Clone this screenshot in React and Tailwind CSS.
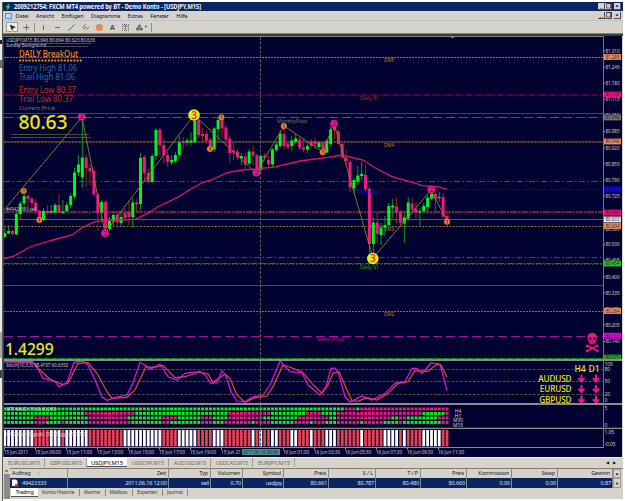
import { clsx } from "clsx";
import {
  MousePointer2, Plus, Minus, Slash, ChartNoAxesGantt, Grid3x3, Type, Shapes,
} from "lucide-react";

const LIME = "#00f818";
const PINK = "#f0187c";
const STEP = 3.88;
const barX = i => 4.7 + i * STEP;

// direction, wick top, body top, body bottom, wick bottom
const CANDLES = [
  ["u", 228, 233, 237, 238], ["u", 225, 231, 233.5, 234], ["d", 230, 231, 234, 235], ["u", 212, 214, 234.5, 235],
  ["u", 201, 203.5, 214, 220], ["u", 193, 196, 203.5, 211], ["d", 194, 196, 199, 207], ["d", 197, 198.5, 203, 208],
  ["d", 199, 202.5, 211, 214], ["d", 210, 210.5, 220, 221], ["u", 208, 211, 220, 221], ["d", 205, 211, 213, 215],
  ["u", 205, 211, 212.5, 214], ["u", 203, 205, 212.5, 213.5], ["d", 194, 205, 212.5, 213], ["u", 200, 211.5, 213, 214],
  ["u", 202, 205, 211, 212.5], ["u", 193, 196, 205, 208], ["u", 168, 172.5, 196.5, 199], ["u", 155, 164.5, 172.5, 176],
  ["u", 117, 157.5, 177.5, 188], ["d", 155, 157.5, 168, 187], ["d", 164, 168, 171.5, 185], ["d", 167, 171, 194.5, 196],
  ["d", 192, 194.5, 213, 231], ["u", 200, 202, 212.5, 221], ["d", 200, 202, 228.5, 233], ["u", 217, 221, 229, 231],
  ["u", 211, 215, 221.5, 227], ["d", 212, 214.5, 222.5, 228], ["u", 211, 217, 223, 227], ["d", 208, 213, 218, 222],
  ["d", 201, 212.5, 217, 225], ["u", 198, 202.5, 217, 227], ["d", 199, 202.5, 204.5, 212], ["u", 153, 158, 204, 210],
  ["d", 155, 157, 173, 180], ["d", 168, 173, 182, 183], ["u", 154, 156, 182, 183], ["u", 128, 130, 156, 160],
  ["d", 128, 129.5, 145, 157], ["d", 138, 145, 155, 164], ["d", 152, 155, 162, 167], ["u", 155, 160, 162.5, 165],
  ["u", 152, 155, 161, 163], ["u", 136, 142.5, 155, 158], ["d", 137, 141, 143, 150], ["u", 138, 140.5, 142.5, 146],
  ["u", 132, 140.5, 142.5, 145], ["u", 117, 121, 142, 143], ["d", 118, 120, 135, 138], ["d", 128, 134, 136, 142],
  ["d", 131, 134, 140.5, 144], ["d", 138, 139.5, 149.5, 151], ["u", 127, 128.5, 149.5, 152], ["u", 117, 120, 129, 142],
  ["d", 117, 119.5, 128.5, 138], ["d", 125, 127.5, 139.5, 145], ["d", 136, 138.5, 153, 163], ["d", 142, 150.5, 152.5, 160],
  ["d", 149, 151.5, 157.5, 160], ["u", 153, 156, 158.5, 165], ["d", 153, 156.5, 164.5, 169], ["u", 149, 151.5, 163.5, 165],
  ["d", 145, 151.5, 155.5, 165], ["d", 154, 155, 171, 172], ["u", 155, 156, 170, 172], ["d", 153, 155.5, 157.5, 161],
  ["d", 156, 160, 164.5, 167], ["u", 148, 149.5, 164.5, 168], ["u", 142, 144.5, 150, 152], ["u", 131, 133.5, 146, 148],
  ["d", 127, 134, 146, 150], ["d", 142, 143.5, 147.5, 149], ["u", 136, 140.5, 146, 151], ["u", 133, 138.5, 142, 144],
  ["d", 137, 139.5, 147.5, 150], ["d", 138, 147.5, 149.5, 152], ["u", 142, 146, 149.5, 153], ["d", 139, 141, 146, 148],
  ["d", 138, 141, 144.5, 149], ["u", 141, 142.5, 147, 148], ["d", 141, 142.5, 151.5, 153], ["u", 139, 141, 152.5, 153],
  ["u", 127, 129.5, 144, 146], ["d", 123, 125, 130.5, 139], ["d", 129, 131.5, 144, 145], ["d", 141, 144, 157.5, 159],
  ["d", 150, 157.5, 161, 165], ["d", 160, 162, 187.5, 192], ["u", 178, 180, 188.5, 193], ["u", 166, 175.5, 181.5, 185],
  ["u", 162, 174, 176, 180], ["d", 165, 175, 189.5, 192], ["d", 187, 189, 244, 257], ["u", 217, 222.5, 244, 259],
  ["d", 213, 222.5, 234, 243], ["u", 223, 227.5, 235, 245], ["u", 216, 225, 227.5, 236], ["u", 203, 206, 225, 227],
  ["u", 199, 205.5, 207.5, 218], ["d", 198, 206.5, 212.5, 223], ["d", 210, 211.5, 222.5, 227], ["u", 213, 217.5, 223.5, 243],
  ["u", 197, 202.5, 218.5, 221], ["d", 198, 203.5, 209.5, 212], ["d", 202, 208.5, 212.5, 218], ["u", 208, 211, 212.5, 227],
  ["u", 203, 206, 211, 213], ["u", 195, 197.5, 207, 213], ["u", 190, 194, 198.5, 200], ["d", 193, 194, 199, 211],
  ["u", 192, 197, 198, 202], ["d", 193, 197, 216.5, 218], ["d", 213, 216, 221, 223],
];

const LEVELS = [
  { y: 57.5, c: "#9a7428", dash: "2 1" },
  { y: 95, c: "#780040", dash: "6 1.5 1.5 1.5", w: 1.3 },
  { y: 113.5, c: "#0c5488" },
  { y: 117.5, c: "#56564c", dash: "9 4" },
  { y: 141.7, c: "#4e4a40" },
  { y: 142.6, c: "#7a4a20", dash: "2 1.4" },
  { y: 181.5, c: "#8a3414", dash: "6 2.5 1.5 2.5" },
  { y: 189.5, c: "#0808a0", dash: "9 4" },
  { y: 212, c: "#9a7a24", dash: "7 1 2 1" },
  { y: 213, c: "#6c0834", dash: "3 1" },
  { y: 219.5, c: "#5c5c38" },
  { y: 226.5, c: "#8c7430", dash: "2 1.4" },
  { y: 257.5, c: "#8a3414", dash: "6 2.5 1.5 2.5" },
  { y: 263.5, c: "#2c6460", dash: "6 1 1.5 1" },
  { y: 264.5, c: "#1c4a14", dash: "2 2" },
  { y: 285.5, c: "#803a14" },
  { y: 311.5, c: "#8c6c28", dash: "2 1" },
  { y: 336.5, c: "#a8109c", dash: "9 4" },
  { y: 358.5, c: "#148c2c", dash: "5 1 1 1" },
];

const PRICES = [
  [51, "81.310"], [67, "81.245"], [83, "81.180"], [99.5, "81.115"], [115, "81.050"], [131.5, "80.985"],
  [148, "80.920"], [164, "80.855"], [180, "80.790"], [196, "80.725"], [229, "80.595"], [244.5, "80.530"],
  [260, "80.465"], [277, "80.400"], [293, "80.335"], [309, "80.270"], [325, "80.205"], [341.5, "80.140"],
];

const TAGS = [
  [57, "81.285", "#f09060"], [94.5, "81.135", "#f0107c"], [117.5, "81.046", "#707070"], [141.5, "80.946", "#f09060"],
  [189.5, "80.754", "#0000f0"], [212.5, "80.660", "#f0107c"], [219.5, "80.633", "#f0f0e8"], [226, "80.604", "#f09060"],
  [263.5, "80.454", "#20c820"], [311, "80.264", "#f09060"], [335.7, "80.163", "#e800e8"], [357.5, "80.075", "#20a820"],
];

// x, y, radius, kind
const MARKS = [
  [23.7, 191, 3, "o"], [39.3, 220, 3, "o"], [81.7, 116.8, 3.8, "p"], [105, 233.3, 3.8, "p"], [194, 115, 5.8, "y"],
  [210, 149, 3, "o"], [221.5, 117.3, 3, "o"], [256.3, 172.8, 3.8, "p"], [283.8, 126, 3, "o"], [322.6, 152.3, 3, "o"],
  [334, 123.5, 3.8, "p"], [372.8, 258.5, 5.8, "y"], [431.3, 189.5, 3.8, "p"], [447, 221.8, 3, "o"],
];

const MARK_STYLE = {
  o: { fill: "#f07838", text: "#701c10", label: "1" },
  p: { fill: "#e8188c", text: "#78186c", label: "2" },
  y: { fill: "#e4f010", text: "#e02850", label: "3" },
};

const MTF_GREEN = [
  [[0, 87], [91, 91]],
  [[0, 20], [34, 57], [69, 77], [82, 85], [108, 113]],
  [[0, 7], [12, 21], [32, 40], [45, 50], [54, 57], [67, 75], [84, 85], [100, 101], [104, 111]],
  [[0, 7], [11, 14], [16, 21], [33, 40], [43, 50], [54, 56], [64, 64], [69, 74], [79, 79], [83, 85], [92, 92], [98, 101], [103, 112]],
];
const WHITE_BARS = [
  [0, 7], [12, 14], [16, 21], [31, 40], [45, 49], [54, 56], [64, 64], [66, 66], [69, 70], [74, 75], [79, 79],
  [83, 85], [92, 92], [98, 101], [103, 103], [108, 112],
];
const inRuns = (runs, i) => runs.some(([a, b]) => i >= a && i <= b);

const MA = "4,258.5 13,256.5 31,246.5 53,240 72,235 82,227.7 95,221.7 110,220.3 135,219.3 148,213.3 158,206.7 177,197.7 192,188.3 203,182.3 210,180.5 228,172.3 242,170 273,167.3 300,161 328,157.3 342,155 363,160 377,169 392,176.7 415,183 422,185.7 438,186.7 447,189.3";
const ZIGZAG = "4,210 82,117 105,233 194,115 256,173 284,126 323,152 334,123 373,258 431,190 447,221";
const STOCH_MAIN = "4,362 33,362.3 38,369 43,378.3 50,380 55,381.7 59,386.7 67,382.7 74,362.3 83,360.8 88,365 95,380 102,397 107,400.3 115,397.7 127,395 133,383 140,362.3 145,365 150,369.3 155,367 160,364 168,376.7 177,380 185,373.3 200,371.3 205,375 211,383.3 217,382.7 222,370.7 226,376 231,391.7 237,401 245,401.7 252,397.3 263,395 270,385 280,361 290,371.7 302,372.7 308,385 320,395 326,386.7 331,368.3 335,368 338,371.7 345,396.7 350,402 362,396 372,400 385,393.3 395,383.3 405,381.7 412,368.3 417,368.3 422,373.3 426,369 431,363 440,364 447,390.7";
const STOCH_SIGNAL = "4,361.5 32,361.7 38,368.3 50,379.3 62,384.3 68,383.3 78,363.3 88,362.7 97,373.3 107,391.7 112,398.3 127,397.3 135,390 146,366.7 152,367.3 163,365.3 175,377.7 185,376.7 200,372 208,374 213,382.3 219,378 225,374.3 230,378.3 237,395 245,402.3 255,397.7 267,396 273,386.7 283,365 290,367.3 302,371.7 312,383.3 322,393.3 328,385 333,373.3 339,371.7 347,390 352,400.7 358,401.3 367,397.7 377,400 388,393.3 398,383.3 408,381.7 415,370.7 428,371.3 437,364.3 441,365 447,377.3";

const TIMES = [
  [4, "15 Jun 2011"], [35, "15 Jun 09:00"], [66, "15 Jun 11:00"], [97, "15 Jun 13:00"], [128, "15 Jun 15:00"],
  [159, "15 Jun 17:00"], [190, "15 Jun 19:00"], [221, "15 Jun 21"], [283, "16 Jun 01:30"], [314, "16 Jun 03:30"],
  [345, "16 Jun 05:30"], [376, "16 Jun 07:30"], [407, "16 Jun 09:30"], [438, "16 Jun 11:30"],
];

const MENU = ["Datei", "Ansicht", "Einfügen", "Diagramme", "Extras", "Fenster", "Hilfe"];
const CHART_TABS = ["EURUSD,M15", "GBPUSD,M15", "USDJPY,M15", "USDCHF,M15", "AUDUSD,M15", "USDCAD,M15", "EURJPY,M15"];
const TERMINAL_TABS = ["Trading", "Konto Historie", "Alarme", "Mailbox", "Experten", "Journal"];
const COLUMNS = [
  { w: "w-[58px]", head: "Auftrag", value: "49423333", left: true },
  { w: "w-[101px]", head: "Zeit", value: "2011.06.16 12:00" },
  { w: "w-[42px]", head: "Typ", value: "sell" },
  { w: "w-[32px]", head: "Volumen", value: "0.70" },
  { w: "w-[41px]", head: "Symbol", value: "usdjpy" },
  { w: "w-[45px]", head: "Preis", value: "80.661" },
  { w: "w-[47px]", head: "S / L", value: "80.787" },
  { w: "w-[45px]", head: "T / P", value: "80.480" },
  { w: "w-[46px]", head: "Preis", value: "80.660" },
  { w: "w-[45px]", head: "Kommission", value: "0.00" },
  { w: "w-[46px]", head: "Swap", value: "0.00" },
  { w: "w-[55px]", head: "Gewinn", value: "0.87" },
];

function Label({ x, y, size, fill, width, anchor, children, weight }) {
  return (
    <text x={x} y={y} fontSize={size} fill={fill} textAnchor={anchor} fontWeight={weight}
      textLength={width} lengthAdjust="spacingAndGlyphs">
      {children}
    </text>
  );
}

// All panels share one coordinate system, each shows its own slice of it
function Panel({ top, height, children }) {
  return (
    <svg className="block bg-[#020230]" width={618} height={height} viewBox={`4 ${top} 618 ${height}`}>
      {children}
      <path d={`M603.5 ${top}V${top + height}`} stroke="#74746c" />
    </svg>
  );
}

function Crosshair({ from, to }) {
  return <path d={`M260.5 ${from}V${to}`} stroke="#5c5c54" strokeDasharray="3 1.5" />;
}

function Candles() {
  return CANDLES.map(([dir, hi, top, bottom, lo], i) => {
    const up = dir === "u";
    return (
      <g key={i}>
        <rect x={barX(i) - 0.5} y={hi} width={1} height={lo - hi} fill={up ? "#0c9820" : "#982818"} />
        <rect x={barX(i) - 1.5} y={top} width={3} height={bottom - top} fill={up ? LIME : PINK} />
      </g>
    );
  });
}

function Skull() {
  return (
    <g fill="#f0187c">
      <path d="M587.5 338q0-5 4.7-5t4.7 5q0 3-2 4v2.500h-5.400V342q-2-1-2-4z" />
      <path d="m587 345.500 10.500 5.500m0-5.500-10.500 5.500" stroke="#f0187c" strokeWidth="1.800" />
      <circle cx="587" cy="345.800" r="1.200" /><circle cx="597.500" cy="345.800" r="1.200" />
      <circle cx="587" cy="351" r="1.200" /><circle cx="597.500" cy="351" r="1.200" />
      <path d="M589 337.500h2.300v2.200H589zM593.200 337.500h2.300v2.200h-2.300zM591.700 340.800h1v1.200h-1z" fill="#020230" />
      <path d="M590.700 343v2M592.300 343v2M593.900 343v2" stroke="#020230" strokeWidth=".4" />
    </g>
  );
}

function MainPanel() {
  return (
    <Panel top={36} height={325}>
      {LEVELS.map(l => (
        <path key={l.y} d={`M4 ${l.y}H603`} stroke={l.c} strokeWidth={l.w || 1} strokeDasharray={l.dash} />
      ))}
      <Crosshair from={37} to={360} />
      <path d="M15 43.500H91M46 46.500H88M12 134.500H89M11 137.500H91" stroke="#4c4c38" />
      <Candles />
      <polyline points={MA} fill="none" stroke="#e01464" strokeWidth="1.300" />
      <polyline points={ZIGZAG} fill="none" stroke="#8c8028" strokeWidth=".9" />
      {MARKS.map(([x, y, r, kind]) => {
        const m = MARK_STYLE[kind];
        return (
          <g key={x}>
            <circle cx={x} cy={y} r={r} fill={m.fill} />
            <Label x={x} y={y + r * 0.63} size={r * 1.75} fill={m.text} anchor="middle" weight="600">{m.label}</Label>
          </g>
        );
      })}

      <Label x={6} y={41.5} size={5} fill="#c8c8bc" width={89}>USDJPY,M15  80.646 80.664 80.623 80.633</Label>
      <Label x={6} y={46.5} size={5} fill="#c8c8bc" width={40}>Sunday Background</Label>
      <Label x={19} y={57.3} size={9} fill="#f88820" width={59} weight="500">DAILY BreakOut</Label>
      <path d="M19 60.500H83" stroke="#f08420" strokeWidth="2" strokeDasharray="2 1.200" />
      <Label x={19} y={71.2} size={8.5} fill="#1c6cac" width={58}>Entry High 81.06</Label>
      <Label x={19} y={80.3} size={8.5} fill="#1c6cac" width={56}>Trail High 81.06</Label>
      <Label x={19} y={92.5} size={8.5} fill="#c43014" width={57}>Entry Low 80.37</Label>
      <Label x={19} y={101.8} size={8.5} fill="#c43014" width={54}>Trail Low 80.37</Label>
      <Label x={19} y={110} size={5.5} fill="#7c7450" width={36}>Current Price</Label>
      <Label x={18.5} y={129} size={19.5} fill="#f0e418" width={49} weight="500">80.63</Label>
      <Label x={6} y={211.3} size={4.5} fill="#c0c0b4" width={30}>#49423333 sell</Label>
      <Label x={5} y={354.5} size={15.5} fill="#e4f010" width={48.5} weight="500">1.4299</Label>

      <Label x={384} y={62.3} size={5} fill="#d07c28" width={10}>DM5</Label>
      <Label x={360} y={99.500} size={5} fill="#c01c18" width={19}>Daily R1</Label>
      <Label x={277} y={122.500} size={5} fill="#74745c" width={30}>MonthlyPivot</Label>
      <Label x={384} y={146.500} size={5} fill="#d07c28" width={10}>DM4</Label>
      <Label x={357} y={194.300} size={5} fill="#1414c0" width={24}>Daily Pivot</Label>
      <Label x={384} y={230.800} size={5} fill="#d07c28" width={10}>DM3</Label>
      <Label x={360} y={268.800} size={5} fill="#20a020" width={19}>Daily S1</Label>
      <Label x={384} y={315.800} size={5} fill="#d07c28" width={10}>DM2</Label>
      <Label x={317} y={341} size={5} fill="#c0109c" width={27}>WeeklyPivot</Label>
      <Skull />

      <rect x={604} y={36} width={18} height={325} fill="#020230" />
      {PRICES.map(([y, p]) => (
        <g key={p}>
          <path d={`M603 ${y}h2`} stroke="#a0a098" />
          <Label x={605.5} y={y + 1.8} size={5} fill="#ccccc0" width={14}>{p}</Label>
        </g>
      ))}
      {TAGS.map(([y, p, fill]) => (
        <g key={p}>
          <rect x={604} y={y - 2.9} width={17} height={5.800} fill={fill} />
          <Label x={605.5} y={y + 1.8} size={5} fill="#3c1c28" width={14}>{p}</Label>
        </g>
      ))}
      <path d="M4 36.500H603" stroke="#808080" />
      <path d="M450.500 36.500h4l-2 2z" fill="#98a898" />
      <path d="M4 360H622" stroke="#8c8c88" strokeWidth="2" />
    </Panel>
  );
}

function StochPanel() {
  return (
    <Panel top={361} height={44}>
      <path d="M4 369.500H603M4 381.500H603M4 394.500H603" stroke="#4c4c38" strokeDasharray="3 1.300" />
      <Crosshair from={361} to={403} />
      <polyline points={STOCH_SIGNAL} fill="none" stroke="#e84838" strokeWidth="1.200" />
      <polyline points={STOCH_MAIN} fill="none" stroke="#e814dc" strokeWidth="1.200" />
      <Label x={6} y={367} size={5} fill="#c8c8bc" width={62}>Stoch(10,3,3) 38.4737 60.6352</Label>
      <Label x={574.500} y={371.500} size={8.500} fill="#ece818" width={11} weight="500">H4</Label>
      <Label x={588.500} y={371.500} size={8.500} fill="#ece818" width={11} weight="500">D1</Label>
      {["AUDUSD", "EURUSD", "GBPUSD"].map((pair, i) => (
        <g key={pair}>
          <Label x={571.5} y={382 + i * 10.4} size={8.2} fill="#ece818" anchor="end" weight="500">{pair}</Label>
          {[581.500, 596].map(x => (
            <path key={x} d={`M${x} ${374.5 + i * 10.5}v7m-3-3.200 3 3.200 3-3.200`} fill="none" stroke="#f0187c" strokeWidth="2.100" />
          ))}
        </g>
      ))}
      {[[365.5, "100"], [371, "80"], [383.3, "50"], [396, "20"], [402, "0"]].map(([y, t]) => (
        <Label key={t} x={604.5} y={y} size={5} fill="#ccccc0">{t}</Label>
      ))}
      <path d="M4 404H622" stroke="#8c8c88" strokeWidth="2" />
    </Panel>
  );
}

function MtfPanel() {
  return (
    <Panel top={405} height={24}>
      {MTF_GREEN.map((runs, row) => CANDLES.map((_, i) => (
        <rect key={`${row}-${i}`} x={barX(i) - 1.4} y={407.5 + row * 4.5} width={2.9} height={2.9}
          fill={inRuns(runs, i) ? LIME : PINK} />
      )))}
      <Crosshair from={405} to={428} />
      <Label x={6} y={411} size={5} fill="#e0e0d4" width={50}>MTF MACD (15,30,60,240)</Label>
      {["H4", "H1", "M30", "M15"].map((t, i) => (
        <Label key={t} x={458} y={413.3 + i * 4.5} size={5} fill="#d0d0c4" anchor="middle">{t}</Label>
      ))}
      <Label x={604.5} y={409.5} size={5} fill="#ccccc0">5</Label>
      <Label x={604.5} y={426.5} size={5} fill="#ccccc0">0</Label>
      <path d="M4 428.500H622" stroke="#8c8c88" strokeWidth="1.300" />
    </Panel>
  );
}

function TrendPanel() {
  return (
    <Panel top={429} height={19}>
      {CANDLES.map((_, i) => {
        const white = inRuns(WHITE_BARS, i);
        return (
          <g key={i}>
            <rect x={barX(i) - 1.4} y={430} width={2.8} height={16.3} fill={white ? "#fbfbfb" : "#dc3c54"} />
            {!white && <path d={`M${barX(i)} 430V446`} stroke="#f08838" strokeWidth=".7" strokeDasharray="1 2" />}
          </g>
        );
      })}
      <Crosshair from={429} to={447} />
      <Label x={6} y={435.5} size={5} fill="#d8d8d0" width={80}>FX Sniper Ergodic CCI Trigger 0.0 1.0</Label>
      <Label x={604.5} y={434.3} size={5} fill="#ccccc0">1.05</Label>
      <Label x={604.5} y={446.3} size={5} fill="#ccccc0">-0.05</Label>
      <path d="M4 447.500H603" stroke="#8c8c88" />
    </Panel>
  );
}

function TimeAxis() {
  return (
    <svg className="block bg-[#020230]" width={618} height={9} viewBox="4 448 618 9">
      {TIMES.map(([x, t]) => (
        <g key={x}>
          <path d={`M${x + 0.5} 447v2.500`} stroke="#a0a098" />
          <Label x={x} y={453.6} size={5} fill="#ccccc0" width={x === 4 ? 24 : x === 221 ? 20 : 26}>{t}</Label>
        </g>
      ))}
      <rect x={242} y={449} width={38} height={6} fill="#4c908c" />
      <Label x={243} y={453.8} size={5} fill="#0c2c3c" width={35}>2011.06.16 00:00</Label>
    </svg>
  );
}

function WindowButtons() {
  return (
    <div className="flex h-[7px] text-[6px] leading-[6px] font-bold text-black">
      {["_", "❐", "×"].map(c => (
        <span key={c} className={clsx(
          "flex w-[7px] items-center justify-center border-r border-b border-[#505050] bg-[#d6d3cb]",
          c === "×" && "ml-[2px]"
        )}>{c}</span>
      ))}
    </div>
  );
}

function Header() {
  return (
    <header className="bg-[#d6d3cb]">
      <div className="flex h-[9px] items-center justify-between bg-[#0c2460] pr-[2px] pl-[2px]">
        <div className="flex items-center gap-[3px]">
          <svg width="6" height="8" viewBox="0 0 6 8"><path d="M4.500 0 .5 4.500h2L1.500 8 5.500 3h-2z" fill="#30d850" /></svg>
          <svg width="190" height="9" className="overflow-visible">
            <Label x={0} y={6.8} size={6.3} fill="#f0f4ff" weight="bold" width={187}>
              2009212754: FXCM MT4 powered by BT - Demo Konto - [USDJPY,M15]
            </Label>
          </svg>
        </div>
        <WindowButtons />
      </div>
      <div className="flex h-[10px] items-center justify-between border-b border-dotted border-[#a8b0c0] pr-[2px] pl-[2px]">
        <div className="flex items-center gap-[7.600px] text-[5.500px] leading-[8px] tracking-[-0.15px] text-[#101010]">
          <span className="-mr-[4px] h-[6px] w-[7px] border border-[#5890e0] bg-[#b8dcf8]" />
          {MENU.map(m => <span key={m}>{m}</span>)}
        </div>
        <WindowButtons />
      </div>
      <div className="flex h-[13px] items-center gap-[7px] border-b border-[#888478] pl-[3px] text-[#505050]">
        <span className="-mr-[3px] flex h-[10px] w-[12px] items-center justify-center border border-[#a09c90] bg-[#f0eee8]">
          <MousePointer2 size={7} fill="#202020" className="text-[#202020]" />
        </span>
        <Plus size={9} strokeWidth={2} className="-mr-px" />
        <span className="-mr-[2px] -ml-[3px] h-[9px] w-px bg-[#908c84]" />
        <Minus size={7} strokeWidth={3} className="rotate-90" />
        <Minus size={7} strokeWidth={3} />
        <Slash size={7} strokeWidth={3} />
        <ChartNoAxesGantt size={7} strokeWidth={3} className="-rotate-45 text-[#7a3c28]" />
        <Grid3x3 size={7} strokeWidth={3} className="text-[#d87840]" />
        <span className="text-[7px] leading-none font-bold">A</span>
        <span className="flex size-[7px] items-center justify-center border border-dotted border-[#606060]">
          <Type size={5} strokeWidth={3} />
        </span>
        <span className="flex items-center gap-px">
          <Shapes size={7} strokeWidth={3} className="text-[#3c3830]" /><span className="text-[4px]">▼</span>
        </span>
        <span className="-ml-[4px] h-[9px] w-px bg-[#908c84]" />
      </div>
    </header>
  );
}

function ChartTabs() {
  return (
    <nav className="flex h-[11px] items-start border-t border-[#f4f2ec] text-[#6c6860]">
      {CHART_TABS.map(t => {
        const active = t === "USDJPY,M15";
        return (
          <span key={t} className={clsx(
            "flex h-[9px] items-center justify-center",
            active ? "w-[40px] border-b border-[#505050] bg-white text-black" : "w-[42px] border-r border-[#a09c94]"
          )}>
            <svg width="34" height="9" className="overflow-visible">
              <Label x={1} y={6.500} size={5.800} fill="currentColor" width={32}>{t}</Label>
            </svg>
          </span>
        );
      })}
      <span className="mt-px mr-[3px] ml-auto text-[4px] leading-[7px] tracking-[4px] text-black">◀▶</span>
    </nav>
  );
}

function Terminal() {
  return (
    <section className="flex h-[32px] text-[5.500px] leading-[8px] tracking-[-0.12px]">
      <div className="flex w-[7px] flex-col items-center bg-[#d6d3cb]">
        <span className="text-[6px] leading-[6px] text-black">×</span>
        <span className="w-[6px] flex-1 bg-[#8c8a86]" />
      </div>
      <div className="flex flex-1 flex-col">
        <div className="flex border-t border-[#807c74]">
          <div>
            <div className="flex h-[9px] bg-[#d6d3cb] text-[#202020]">
              {COLUMNS.map((c, i) => (
                <span key={i} className={clsx("flex items-center border-r border-[#8c8880] px-[2px]", c.w, !c.left && "justify-end")}>
                  {c.head}{c.left && <span className="ml-[6px] text-[4px] text-[#807c74]">△</span>}
                </span>
              ))}
            </div>
            <div className="flex h-[10px] bg-[#0c2460] text-[#d8e4f4]">
              {COLUMNS.map((c, i) => (
                <span key={i} className={clsx("flex items-center border-r border-[#7c8498] px-[1px]", c.w, !c.left && "justify-end")}>
                  {c.left && (
                    <svg width="11" height="8" className="shrink-0">
                      <path d="M1 .500h4l1.500 1.500v5H1z" fill="#f8f8f8" /><path d="M4 5h3v2.500H4z" fill="#e03c28" />
                    </svg>
                  )}
                  {c.value}
                </span>
              ))}
            </div>
          </div>
          <div className="flex w-[8px] flex-col text-center text-[4px] leading-[9px] text-black">
            <span className="h-[9px] border border-[#a09c94] leading-[7px]">▲</span>
            <span className="h-[10px] border border-[#a09c94]">▼</span>
          </div>
        </div>
        <nav className="flex items-start text-[5.200px] tracking-[-0.2px] text-[#404040]">
          <span className="mr-[4px] ml-px flex h-[9px] w-[27px] items-center justify-center border-b border-[#505050] bg-white text-[5.500px] text-black">
            {TERMINAL_TABS[0]}
          </span>
          {TERMINAL_TABS.slice(1).map(t => (
            <span key={t} className="mt-px mr-[4px] flex h-[7px] items-center border-r border-[#8c8880] pr-[4.500px]">{t}</span>
          ))}
        </nav>
      </div>
    </section>
  );
}

export default function App() {
  return (
    <div className="flex h-[501px] w-[625px] overflow-hidden bg-white pt-[2px] font-['Noto_Sans','Open_Sans',sans-serif] tracking-[-0.1px] whitespace-nowrap">
      <div className="flex h-[499px] w-[3px] shrink-0 flex-col border-r border-[#5c5c54] bg-[#e8e8e4]">
        <span className="mt-[38px] h-[4px] bg-[#202020]" />
        <span className="mt-[16px] h-[8px] bg-[#6c6c68]" />
        <span className="mt-[264px] h-[26px] bg-[#a8a8a4]" />
        <span className="mt-[12px] h-[8px] bg-[#404040]" />
      </div>
      <div className="flex h-[497px] w-[620px] flex-col bg-[#d6d3cb]">
        <Header />
        <main className="h-[423px] border-t-2 border-l border-[#3c3c34]">
          <MainPanel />
          <StochPanel />
          <MtfPanel />
          <TrendPanel />
          <TimeAxis />
        </main>
        <ChartTabs />
        <Terminal />
      </div>
    </div>
  );
}
